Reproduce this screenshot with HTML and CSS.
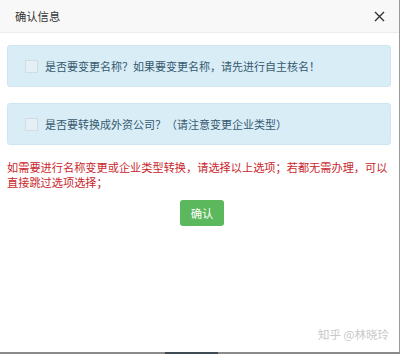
FILE: index.html
```html
<!DOCTYPE html>
<html lang="zh">
<head>
<meta charset="utf-8">
<link rel="stylesheet" href="styles.css">
</head>
<body>
<div class="dialog">
  <div class="header">
    <span class="title">确认信息</span>
    <span class="close">
      <svg width="11" height="11" viewBox="0 0 11 11"><path d="M1 1L10 10M10 1L1 10" stroke="#333" stroke-width="1.4" fill="none"/></svg>
    </span>
  </div>
  <div class="content">
    <div class="alert"><span class="box"></span><span>是否要变更名称？如果要变更名称，请先进行自主核名！</span></div>
    <div class="alert"><span class="box"></span><span>是否要转换成外资公司？（请注意变更企业类型）</span></div>
    <p class="warn">如需要进行名称变更或企业类型转换，请选择以上选项；若都无需办理，可以直接跳过选项选择；</p>
    <div class="actions"><button class="btn">确认</button></div>
  </div>
  <div class="footer"><span class="mark">知乎 @林晓玲</span></div>
</div>
<div class="scroll"><span class="thumb"></span></div>
</body>
</html>
```
FILE: styles.css
```css
html, body {
  margin: 0;
  padding: 0;
  background: #fff;
}
body {
  width: 400px;
  height: 354px;
  overflow: hidden;
  font-family: "Noto Sans CJK SC", "Noto Sans", sans-serif;
}
.dialog {
  width: 399px;
  height: 352px;
  border-right: 1px solid #9a9a9a;
  display: flex;
  flex-direction: column;
}
.header {
  height: 33px;
  box-sizing: border-box;
  background: #f8f8f8;
  border-bottom: 1px solid #ececec;
  display: flex;
  align-items: center;
  justify-content: space-between;
  padding: 0 14px 0 15px;
}
.title {
  font-size: 11.3px;
  color: #333;
}
.close {
  display: flex;
}
.content {
  padding: 12px 7px 0 7px;
  display: flex;
  flex-direction: column;
  flex: 1;
}
.alert {
  width: 384px;
  height: 42px;
  box-sizing: border-box;
  background: #d9edf7;
  border: 1px solid #cfe6f2;
  border-radius: 3px;
  display: flex;
  align-items: center;
  padding-left: 17px;
  font-size: 11px;
  color: #36596f;
  margin-bottom: 16px;
}
.box {
  width: 11px;
  height: 11px;
  border: 1px solid #d3dce1;
  background: #e4f0f6;
  margin-right: 7px;
  flex: none;
}
.warn {
  margin: -1px 0 0 0;
  font-size: 11.2px;
  line-height: 15px;
  color: #c9262c;
}
.actions {
  display: flex;
  justify-content: center;
  margin-top: 10px;
  padding-left: 5px;
}
.btn {
  width: 44px;
  height: 26px;
  border: none;
  border-radius: 3px;
  background: #5cb85c;
  color: #fff;
  font-family: inherit;
  font-size: 11.3px;
  padding: 0;
}
.footer {
  display: flex;
  justify-content: flex-end;
  padding: 0 10px 10px 0;
}
.mark {
  font-size: 11.5px;
  color: #c8c8c8;
}
.scroll {
  height: 2px;
  background: #8a8a8a;
  position: relative;
}
.thumb {
  position: absolute;
  left: 165px;
  width: 53px;
  top: 0;
  height: 2px;
  background: #3f4a55;
}
```
